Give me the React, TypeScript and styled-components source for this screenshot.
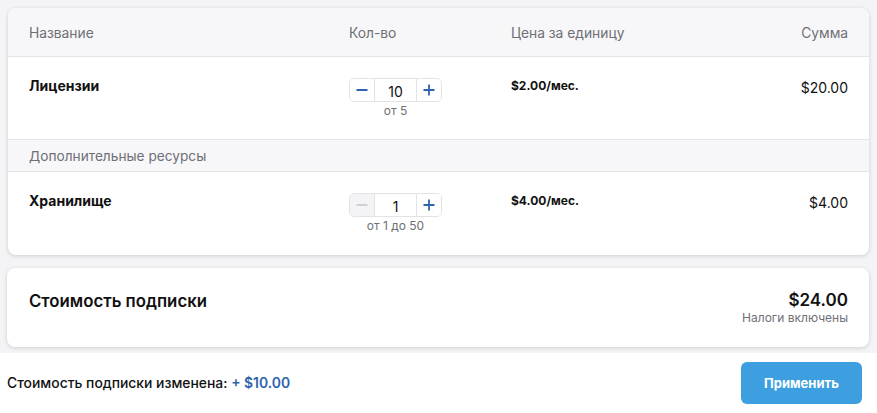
import React from "react";
import styled, { createGlobalStyle } from "styled-components";

const GlobalStyle = createGlobalStyle`
  html, body {
    margin: 0;
    padding: 0;
    background: #ffffff;
    font-family: Inter, "Noto Sans", Arial, sans-serif;
    color: #111;
  }
  * { box-sizing: border-box; }
`;

const Page = styled.div`
  width: 877px;
  height: 413px;
  display: flex;
  flex-direction: column;
`;

const Content = styled.div`
  background: #f4f4f6;
  padding: 8px 8px 6px 7px;
  display: flex;
  flex-direction: column;
  gap: 13px;
`;

const Card = styled.div<{ $ml?: number }>`
  background: #fff;
  border-radius: 8px;
  box-shadow: 0 1px 4px rgba(0, 0, 0, 0.16);
  overflow: hidden;
  margin-left: ${(p) => p.$ml ?? 0}px;
`;

const Grid = styled.div`
  display: grid;
  grid-template-columns: 320px 162px 1fr auto;
  padding: 0 21px;
  align-items: start;
`;

const HeadRow = styled(Grid)`
  background: #f7f7f9;
  height: 49px;
  align-items: center;
  border-bottom: 1px solid #e4e4e8;
  font-size: 13.8px;
  color: #6f6f76;
`;

const HeadCell = styled.div<{ $right?: boolean }>`
  text-align: ${(p) => (p.$right ? "right" : "left")};
  padding-top: 1px;
`;

const ItemRow = styled(Grid)<{ $h: number }>`
  height: ${(p) => p.$h}px;
  padding-top: 19px;
`;

const Name = styled.div`
  font-size: 14px;
  font-weight: 700;
  color: #111;
  padding-top: 1px;
`;

const Price = styled.div`
  font-size: 12px;
  font-weight: 700;
  color: #111;
  padding-top: 2px;
`;

const Sum = styled.div`
  font-size: 14px;
  color: #111;
  text-align: right;
  padding-top: 3px;
`;

const QtyCol = styled.div`
  display: inline-flex;
  flex-direction: column;
  align-items: center;
  width: 93px;
  padding-top: 2px;
`;

const Stepper = styled.div`
  display: flex;
  height: 24px;
  width: 93px;
  border: 1px solid #e3e3e7;
  border-radius: 5px;
  overflow: hidden;
`;

const StepBtn = styled.div<{ $disabled?: boolean }>`
  width: 24px;
  display: flex;
  align-items: center;
  justify-content: center;
  background: ${(p) => (p.$disabled ? "#f4f4f6" : "#fff")};
  color: ${(p) => (p.$disabled ? "#cfd0d6" : "#2e63ad")};
`;

const StepValue = styled.div`
  flex: 1;
  display: flex;
  align-items: center;
  justify-content: center;
  font-size: 14px;
  color: #111;
  border-left: 1px solid #e3e3e7;
  border-right: 1px solid #e3e3e7;
  padding-top: 2px;
`;

const Hint = styled.div`
  font-size: 12px;
  color: #6f6f76;
  margin-top: 1px;
`;

const Section = styled.div`
  background: #f7f7f9;
  height: 33px;
  border-top: 1px solid #e4e4e8;
  border-bottom: 1px solid #e4e4e8;
  padding: 0 21px;
  display: flex;
  align-items: center;
  font-size: 13.7px;
  color: #6f6f76;
`;

const TotalCard = styled(Card)`
  height: 79px;
  display: flex;
  justify-content: space-between;
  align-items: flex-start;
  padding: 21px 21px 0 22px;
`;

const TotalLabel = styled.div`
  font-size: 16.8px;
  font-weight: 600;
  color: #111;
  padding-top: 2px;
`;

const TotalRight = styled.div`
  display: flex;
  flex-direction: column;
  align-items: flex-end;
`;

const TotalValue = styled.div`
  font-size: 17px;
  font-weight: 600;
  color: #111;
  line-height: 22px;
`;

const TotalNote = styled.div`
  font-size: 12px;
  color: #6f6f76;
  line-height: 14px;
`;

const Footer = styled.div`
  flex: 1;
  display: flex;
  align-items: center;
  justify-content: space-between;
  padding: 0 15px 1px 7px;
`;

const ChangeText = styled.div`
  font-size: 13.9px;
  font-weight: 500;
  color: #111;
`;

const Delta = styled.span`
  color: #2e63ad;
  font-weight: 600;
`;

const ApplyButton = styled.button`
  width: 121px;
  height: 42px;
  border: none;
  border-radius: 6px;
  background: #3e9fe0;
  color: #fff;
  font-family: inherit;
  font-size: 13px;
  font-weight: 700;
  cursor: pointer;
`;

const Minus = () => (
  <svg width="12" height="12" viewBox="0 0 12 12">
    <path d="M0.5 6h11" stroke="currentColor" strokeWidth="1.8" />
  </svg>
);

const Plus = () => (
  <svg width="12" height="12" viewBox="0 0 12 12">
    <path d="M0.5 6h11M6 0.5v11" stroke="currentColor" strokeWidth="1.8" />
  </svg>
);

type Item = {
  name: string;
  qty: number;
  hint: string;
  price: string;
  sum: string;
  minDisabled?: boolean;
  height: number;
};

const QtyStepper = ({ item }: { item: Item }) => (
  <QtyCol>
    <Stepper>
      <StepBtn $disabled={item.minDisabled}>
        <Minus />
      </StepBtn>
      <StepValue>{item.qty}</StepValue>
      <StepBtn>
        <Plus />
      </StepBtn>
    </Stepper>
    <Hint>{item.hint}</Hint>
  </QtyCol>
);

const Row = ({ item }: { item: Item }) => (
  <ItemRow $h={item.height}>
    <Name>{item.name}</Name>
    <div>
      <QtyStepper item={item} />
    </div>
    <Price>{item.price}</Price>
    <Sum>{item.sum}</Sum>
  </ItemRow>
);

const licenses: Item = {
  name: "Лицензии",
  qty: 10,
  hint: "от 5",
  price: "$2.00/мес.",
  sum: "$20.00",
  height: 82,
};

const storage: Item = {
  name: "Хранилище",
  qty: 1,
  hint: "от 1 до 50",
  price: "$4.00/мес.",
  sum: "$4.00",
  minDisabled: true,
  height: 83,
};

export default function App() {
  return (
    <Page>
      <GlobalStyle />
      <Content>
        <Card $ml={1}>
          <HeadRow>
            <HeadCell>Название</HeadCell>
            <HeadCell>Кол-во</HeadCell>
            <HeadCell>Цена за единицу</HeadCell>
            <HeadCell $right>Сумма</HeadCell>
          </HeadRow>
          <Row item={licenses} />
          <Section>Дополнительные ресурсы</Section>
          <Row item={storage} />
        </Card>
        <TotalCard>
          <TotalLabel>Стоимость подписки</TotalLabel>
          <TotalRight>
            <TotalValue>$24.00</TotalValue>
            <TotalNote>Налоги включены</TotalNote>
          </TotalRight>
        </TotalCard>
      </Content>
      <Footer>
        <ChangeText>
          Стоимость подписки изменена: <Delta>+ $10.00</Delta>
        </ChangeText>
        <ApplyButton>Применить</ApplyButton>
      </Footer>
    </Page>
  );
}
